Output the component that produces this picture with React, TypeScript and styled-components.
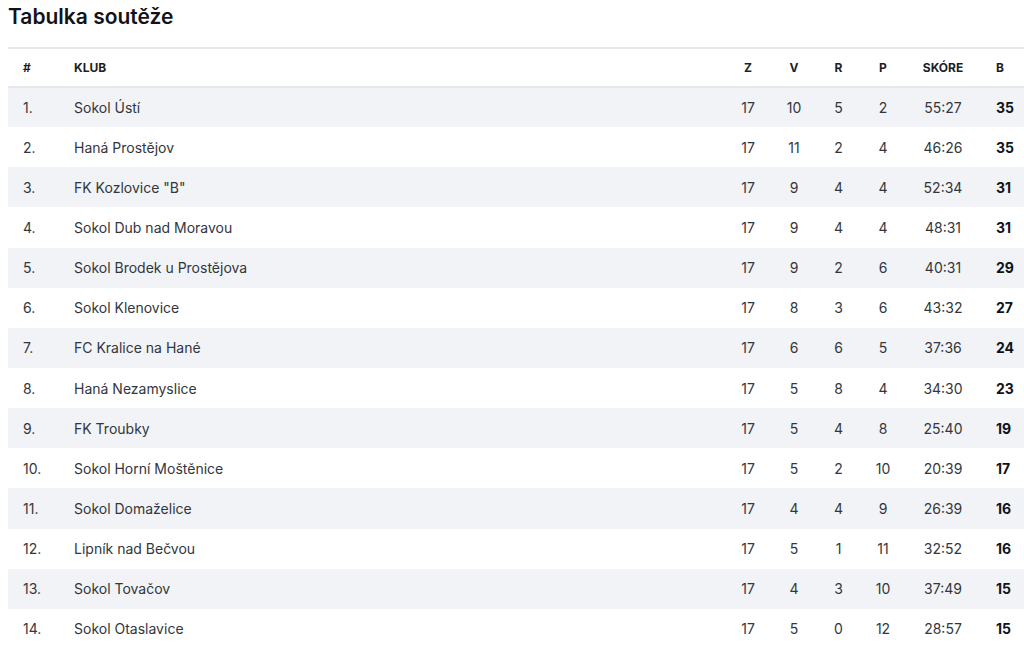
import React from 'react';
import styled, { createGlobalStyle } from 'styled-components';

// Tabulka soutěže – jednoduchá tabulka výsledků
interface TeamRow {
  pos: number;
  club: string;
  z: number;
  v: number;
  r: number;
  p: number;
  score: string;
  b: number;
}

const rows: TeamRow[] = [
  { pos: 1, club: 'Sokol Ústí', z: 17, v: 10, r: 5, p: 2, score: '55:27', b: 35 },
  { pos: 2, club: 'Haná Prostějov', z: 17, v: 11, r: 2, p: 4, score: '46:26', b: 35 },
  { pos: 3, club: 'FK Kozlovice "B"', z: 17, v: 9, r: 4, p: 4, score: '52:34', b: 31 },
  { pos: 4, club: 'Sokol Dub nad Moravou', z: 17, v: 9, r: 4, p: 4, score: '48:31', b: 31 },
  { pos: 5, club: 'Sokol Brodek u Prostějova', z: 17, v: 9, r: 2, p: 6, score: '40:31', b: 29 },
  { pos: 6, club: 'Sokol Klenovice', z: 17, v: 8, r: 3, p: 6, score: '43:32', b: 27 },
  { pos: 7, club: 'FC Kralice na Hané', z: 17, v: 6, r: 6, p: 5, score: '37:36', b: 24 },
  { pos: 8, club: 'Haná Nezamyslice', z: 17, v: 5, r: 8, p: 4, score: '34:30', b: 23 },
  { pos: 9, club: 'FK Troubky', z: 17, v: 5, r: 4, p: 8, score: '25:40', b: 19 },
  { pos: 10, club: 'Sokol Horní Moštěnice', z: 17, v: 5, r: 2, p: 10, score: '20:39', b: 17 },
  { pos: 11, club: 'Sokol Domaželice', z: 17, v: 4, r: 4, p: 9, score: '26:39', b: 16 },
  { pos: 12, club: 'Lipník nad Bečvou', z: 17, v: 5, r: 1, p: 11, score: '32:52', b: 16 },
  { pos: 13, club: 'Sokol Tovačov', z: 17, v: 4, r: 3, p: 10, score: '37:49', b: 15 },
  { pos: 14, club: 'Sokol Otaslavice', z: 17, v: 5, r: 0, p: 12, score: '28:57', b: 15 },
];

const App: React.FC = () => {
  return (
    <Page>
      <GlobalStyle />
      <Title>Tabulka soutěže</Title>
      <Table>
        <thead>
          <HeadRow>
            <HeadCell $w={51}>#</HeadCell>
            <HeadCell>Klub</HeadCell>
            <HeadCell $w={46} $center>Z</HeadCell>
            <HeadCell $w={46} $center>V</HeadCell>
            <HeadCell $w={43} $center>R</HeadCell>
            <HeadCell $w={46} $center>P</HeadCell>
            <HeadCell $w={74} $center>Skóre</HeadCell>
            <HeadCell $w={44} $pad={16}>B</HeadCell>
          </HeadRow>
        </thead>
        <tbody>
          {rows.map((row) => (
            <Row key={row.pos} $striped={row.pos % 2 === 1}>
              <Cell>{row.pos}.</Cell>
              <Cell>{row.club}</Cell>
              <Cell $center>{row.z}</Cell>
              <Cell $center>{row.v}</Cell>
              <Cell $center>{row.r}</Cell>
              <Cell $center>{row.p}</Cell>
              <Cell $center>{row.score}</Cell>
              <PointsCell>{row.b}</PointsCell>
            </Row>
          ))}
        </tbody>
      </Table>
    </Page>
  );
};

export default App;


const GlobalStyle = createGlobalStyle`
  body {
    margin: 0;
    background: #ffffff;
    font-family: Inter, "Noto Sans", "Liberation Sans", sans-serif;
    color: #2f3237;
  }
`;

const Page = styled.div`
  padding: 3px 0 0 8px;
  overflow: hidden;
`;

const Title = styled.h2`
  margin: 0 0 16px 0;
  font-size: 21px;
  line-height: 28px;
  font-weight: 600;
  color: #111318;
`;

const Table = styled.table`
  width: 1016px;
  table-layout: fixed;
  border-collapse: collapse;
  border-top: 2px solid #e6e8eb;
  font-size: 14px;
`;

const HeadRow = styled.tr`
  height: 39px;
  border-bottom: 2px solid #e6e8eb;
`;

const HeadCell = styled.th<{ $w?: number; $center?: boolean; $pad?: number }>`
  box-sizing: border-box;
  width: ${(p) => (p.$w ? `${p.$w}px` : 'auto')};
  padding: 0 0 0 ${(p) => (p.$center ? 0 : p.$pad ?? 15)}px;
  text-align: ${(p) => (p.$center ? 'center' : 'left')};
  font-size: 12px;
  font-weight: 700;
  text-transform: uppercase;
  color: #1c1f24;
`;

const Row = styled.tr<{ $striped: boolean }>`
  height: 40.15px;
  background: ${(p) => (p.$striped ? '#f1f3f6' : '#ffffff')};
`;

const Cell = styled.td<{ $center?: boolean }>`
  padding: 0 0 0 ${(p) => (p.$center ? '0' : '15px')};
  text-align: ${(p) => (p.$center ? 'center' : 'left')};
  color: #33363c;
`;

const PointsCell = styled.td`
  padding: 0 0 0 16px;
  font-weight: 700;
  color: #111318;
`;
